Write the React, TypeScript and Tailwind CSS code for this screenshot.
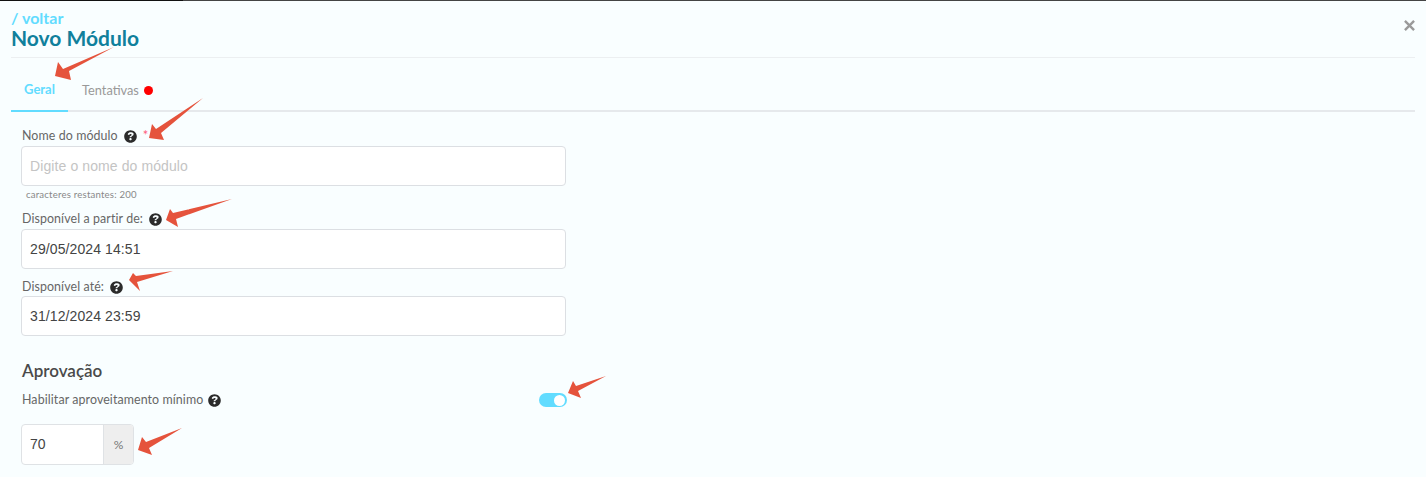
import React from "react";

const Help = () => (
  <svg viewBox="0 0 512 512" className="w-[13px] h-[13px] shrink-0 fill-[#2b2b2b]">
    <path d="M504 256c0 137-111 248-248 248S8 393 8 256 119 8 256 8s248 111 248 248zM262.700 90c-54.500 0-89.200 23-116.500 63.700-3.500 5.300-2.300 12.400 2.700 16.300l34.700 26.300c5.200 3.900 12.600 3 16.700-2.100 17.900-22.700 30.100-35.800 57.300-35.800 20.400 0 45.700 13.100 45.700 33 0 15-12.400 22.700-32.600 34-23.600 13.200-54.800 29.700-54.800 70.900V270c0 6.600 5.400 12 12 12h56c6.600 0 12-5.400 12-12v-1.300c0-28.600 83.500-29.800 83.500-107.200 0-41.300-42.800-71.500-85.200-71.500zM256 314c-25.400 0-46 20.600-46 46s20.600 46 46 46 46-20.600 46-46-20.600-46-46-46z" />
  </svg>
);

const arrows = [
  "114,47 69,71 71,80 55,76 58,62 63,69",
  "203,98 161,133 164,140 149,138 152,124 156,129",
  "232,199 176,219 178,227 166,220 170,209 173,213",
  "173,271 137,282 140,291 129,280 133,273 136,276",
  "606,376 578,391 581,398 568,393 573,381 576,386",
  "182,428 149,448 152,455 138,450 142,437 146,442",
];

const Label = ({ children, mb = "mb-[2px]" }: { children: React.ReactNode; mb?: string }) => (
  <div className={`flex items-center gap-[6px] h-[16px] pl-[1px] text-[12.4px] tracking-[0.1px] text-[#666] ${mb}`}>{children}</div>
);

const Field = ({ value, placeholder }: { value?: string; placeholder?: string }) => (
  <input
    readOnly
    value={value}
    placeholder={placeholder}
    className="block w-[545px] h-[40px] rounded-[4px] border border-[#dcdfe3] bg-white px-[8px] text-[14px] tracking-[0.1px] text-[#444] placeholder:text-[#c4c4c4] outline-none [font-family:'Liberation_Sans',sans-serif]"
  />
);

export default function App() {
  return (
    <div className="relative h-[477px] w-[1426px] overflow-hidden bg-[#f9feff] [font-family:Lato,'Noto_Sans',sans-serif]">
      <div className="flex h-[1px]">
        <div className="w-[183px] bg-[#111]" />
        <div className="flex-1 bg-[#444]" />
      </div>
      <div className="px-[11px]">
        <div className="flex justify-between border-b border-[#eceff1] h-[57px] pt-[9px]">
          <div>
            <div className="text-[16px] leading-[15px] font-bold text-[#62dcff]">/ voltar</div>
            <div className="mt-[1px] text-[21px] leading-[24px] font-bold text-[#10809c]">Novo Módulo</div>
          </div>
          <div className="pt-[4px]">
            <svg viewBox="0 0 12 12" className="w-[11px] h-[11px] mt-[6px] stroke-[#9a9a9a]" strokeWidth="2.6" fill="none">
              <path d="M1 1L11 11M11 1L1 11" />
            </svg>
          </div>
        </div>
        <div className="flex h-[54px] border-b-2 border-[#e6e9ec] text-[13px]">
          <div className="flex w-[57px] h-[54px] justify-center items-center pt-[11px] border-b-2 border-[#62dcff] font-bold text-[#62dcff]">Geral</div>
          <div className="flex items-center gap-[5px] pl-[14px] pt-[13px] text-[12.8px] text-[#999]">
            Tentativas <span className="h-[9px] w-[9px] rounded-full bg-[#ff0000]" />
          </div>
        </div>
      </div>
      <div className="pl-[21px] pt-[16px]">
        <Label>
          Nome do módulo <Help />
          <span className="text-[#ff5c7c] text-[13px] leading-[13px] -mt-[2px]">*</span>
        </Label>
        <Field placeholder="Digite o nome do módulo" />
        <div className="pl-[5px] pt-[3px] h-[25px] text-[9.6px] leading-[12px] text-[#888] tracking-[0.2px]">caracteres restantes: 200</div>
        <Label>
          Disponível a partir de: <Help />
        </Label>
        <Field value="29/05/2024 14:51" />
        <div className="h-[10px]" />
        <Label mb="mb-[1px]">
          Disponível até: <Help />
        </Label>
        <Field value="31/12/2024 23:59" />
        <div className="mt-[24px] pl-[1px] text-[17px] leading-[22px] font-semibold text-[#4a4a4a]">Aprovação</div>
        <div className="mt-[10px] flex w-[546px] items-center justify-between h-[16px]">
          <div className="flex items-center gap-[5px] pl-[1px] text-[12.4px] text-[#666] tracking-[0.1px]">
            Habilitar aproveitamento mínimo <Help />
          </div>
          <div className="flex h-[14px] w-[28px] items-center justify-end rounded-full bg-[#62dcff] pr-[2px]">
            <span className="h-[11px] w-[11px] rounded-full bg-white" />
          </div>
        </div>
        <div className="mt-[16px] flex h-[41px] w-[113px] overflow-hidden rounded-[4px] border border-[#dfe2e5] bg-white">
          <div className="flex-1 flex items-center pl-[8px] text-[14px] text-[#444] [font-family:'Liberation_Sans',sans-serif]">70</div>
          <div className="flex w-[30px] items-center justify-center border-l border-[#dfe2e5] bg-[#eeeeee] text-[12px] text-[#777]">%</div>
        </div>
      </div>
      <svg className="pointer-events-none absolute inset-0" width="1426" height="477">
        {arrows.map((p) => (
          <polygon key={p} points={p} fill="#e5533c" />
        ))}
      </svg>
    </div>
  );
}
